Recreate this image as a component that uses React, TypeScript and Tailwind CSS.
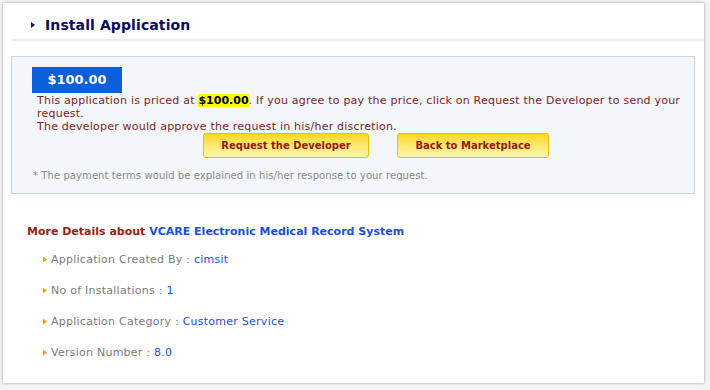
const font = "font-['DejaVu_Sans','Verdana',sans-serif]";

function Arrow({ className }: { className: string }) {
  return (
    <svg viewBox="0 0 4 6" className={className}>
      <path d="M0 0L4 3L0 6Z" fill="currentColor" />
    </svg>
  );
}

const details = [
  { label: "Application Created By", value: "cimsit" },
  { label: "No of Installations", value: "1" },
  { label: "Application Category", value: "Customer Service" },
  { label: "Version Number", value: "8.0" },
];

export default function App() {
  return (
    <div className={`${font} w-[710px] h-[390px] bg-[#f4f4f4] pt-[3px] pl-[3px]`}>
      <div className="w-[701px] h-[380px] bg-white shadow-[0_0_3px_rgba(0,0,0,0.35)] pl-[8px] pr-[9px]">
        <div className="flex items-center h-[38px] pt-[8px] pl-[20px] border-b-2 border-[#ebebeb] -mr-[9px]">
          <Arrow className="w-[4px] h-[6px] text-[#101060]" />
          <h1 className="ml-[10px] text-[14px] font-bold text-[#0c0a5c] tracking-[0.1px]">Install Application</h1>
        </div>

        <div className="mt-[15px] h-[138px] border border-[#c6d6ec] bg-[#f3f6fb] pt-[10px] pl-[20px]">
          <div className="w-[90px] h-[26px] bg-[#0b5fdc] text-white font-bold text-[13px] flex items-center justify-center">
            $100.00
          </div>
          <div className="pl-[5px] pt-[1px] text-[11px] leading-[13px] text-[#7d1d24] tracking-[0.22px]">
            <p>
              This application is priced at{" "}
              <span className="bg-[#ffff00] text-black font-bold tracking-normal">$100.00</span>. If you agree to pay the price, click on Request the Developer to send your request.
            </p>
            <p>The developer would approve the request in his/her discretion.</p>
          </div>
          <div className="flex gap-[28px] pl-[171px]">
            <button className="w-[166px] h-[25px] rounded-[3px] border border-[#e8bc00] bg-gradient-to-b from-[#ffd800] to-[#fff6a6] text-[10px] font-bold text-[#8f1a10]">
              Request the Developer
            </button>
            <button className="w-[152px] h-[25px] rounded-[3px] border border-[#e8bc00] bg-gradient-to-b from-[#ffd800] to-[#fff6a6] text-[10px] font-bold text-[#8f1a10]">
              Back to Marketplace
            </button>
          </div>
          <p className="mt-[10px] pl-[1px] text-[10px] text-[#888888] tracking-[0.08px]">
            * The payment terms would be explained in his/her response to your request.
          </p>
        </div>

        <div className="pl-[16px] pt-[31px]">
          <h2 className="text-[11px] font-bold text-[#952312] leading-[13px]">
            More Details about <span className="text-[#1a4fd6]">VCARE Electronic Medical Record System</span>
          </h2>
          <ul className="pl-[16px] mt-[15px] flex flex-col gap-[18px]">
            {details.map((d) => (
              <li key={d.label} className="flex items-center text-[11px] leading-[13px] text-[#7b7b7b] tracking-[0.25px]">
                <Arrow className="w-[4px] h-[7px] text-[#f0a000] mr-[4px]" />
                <span>
                  {d.label} : <span className="text-[#1b50d8]">{d.value}</span>
                </span>
              </li>
            ))}
          </ul>
        </div>
      </div>
    </div>
  );
}
